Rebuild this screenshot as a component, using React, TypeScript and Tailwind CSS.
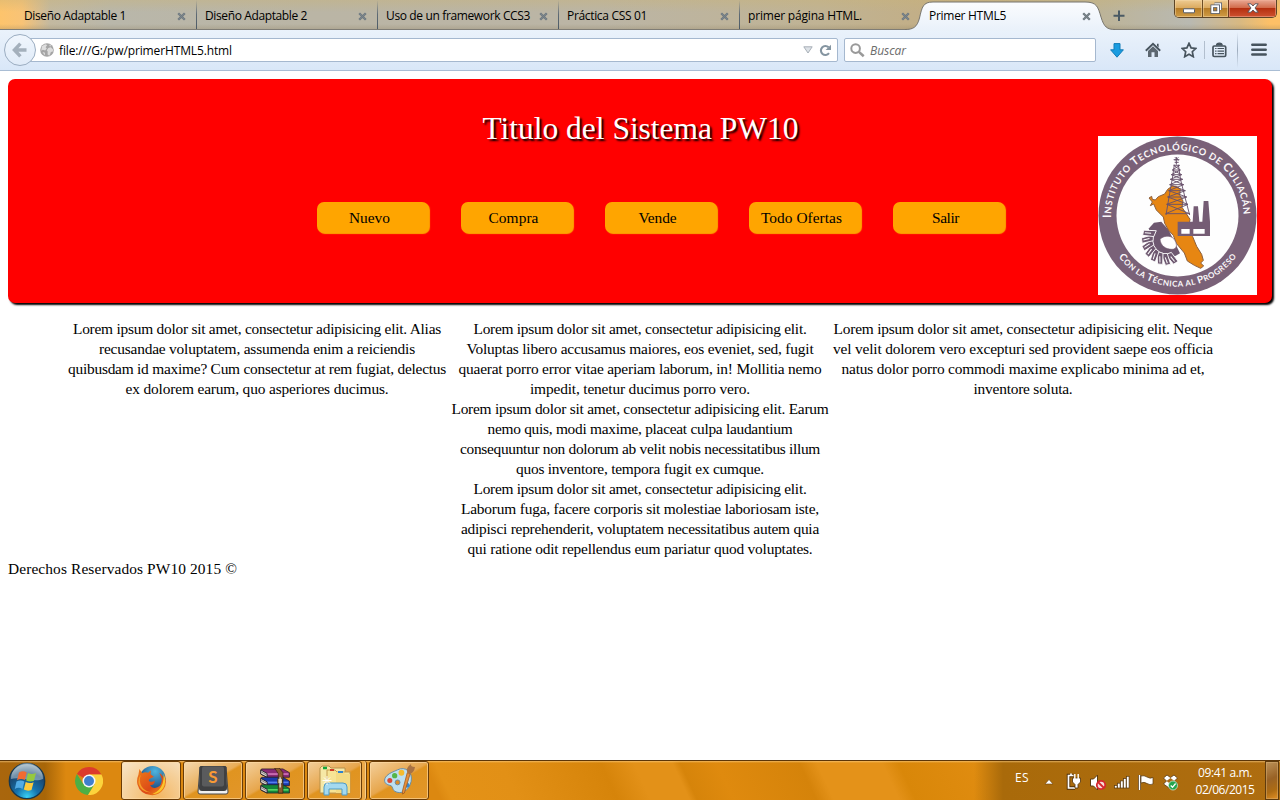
import React, { useLayoutEffect, useRef, useState } from "react";

// Spaces a line of text out evenly so that it takes up the given width.
function Fit({ w, children, className = "" }: { w: number; children: string; className?: string }) {
  const ref = useRef<HTMLSpanElement>(null);
  const [gap, setGap] = useState(0);
  useLayoutEffect(() => {
    if (ref.current) {
      setGap((w - ref.current.getBoundingClientRect().width) / children.length);
    }
  }, []);
  return (
    <span ref={ref} className={"inline-block whitespace-nowrap " + className} style={{ letterSpacing: gap }}>
      {children}
    </span>
  );
}

function CloseX() {
  return (
    <svg viewBox="0 0 9 9" className="h-[9px] w-[9px] shrink-0">
      <path d="M1.2 1.2L7.8 7.8M7.8 1.2L1.2 7.8" stroke="#6d7880" strokeWidth="2.3" />
      <path d="M1.5 1.5L7.5 7.5M7.5 1.5L1.5 7.5" stroke="#7d868b" strokeWidth="1" />
    </svg>
  );
}

const tabs: [string, number][] = [
  ["Diseño Adaptable 1", 102],
  ["Diseño Adaptable 2", 102],
  ["Uso de un framework CCS3", 144],
  ["Práctica CSS 01", 80],
  ["primer página HTML.", 114],
];

function TabBar() {
  return (
    <div className="relative flex h-[30px] border-b border-[#7f7d76] bg-[linear-gradient(90deg,#fdc46c_0px,#f8c376_22px,#c3b9a0_50px,#b9b7aa_110px,#bab5a5_300px,#bbb5a5_600px,#c0b394_820px,#c3ad82_960px,#bdb395_1090px,#b9b9b1_1190px,#d8b982_1240px,#fdc067_1270px)] pl-[15px]">
      <div className="absolute inset-0 bg-[linear-gradient(180deg,#c9b37866_0px,#c9b37800_12px,#8a7b5a00_24px,#8a7b5a40_29px)]" />
      {tabs.map(([t, w], i) => (
        <div
          key={t}
          className={
            "relative flex w-[181px] items-center justify-between pt-[3px] pr-[10.5px] pl-[9px] " +
            (i < 4 ? "after:absolute after:top-0 after:right-[-1px] after:h-[29px] after:w-px after:bg-[linear-gradient(180deg,#8a8d8d00,#5e6a74_50%,#4c5a66)]" : "")
          }
        >
          <Fit w={w} className="text-[12px] leading-[16px] text-black">{t}</Fit>
          <CloseX />
        </div>
      ))}
      <div className="relative flex w-[181px] items-center justify-between pt-[3px] pr-[10.5px] pl-[9px]">
        <svg viewBox="0 0 210 31" className="absolute top-0 left-[-15px] h-[31px] w-[210px]">
          <defs>
            <linearGradient id="tabFill" x1="0" y1="0" x2="0" y2="1">
              <stop offset="0" stopColor="#fbfcfe" />
              <stop offset="1" stopColor="#e9f1fa" />
            </linearGradient>
          </defs>
          <path
            d="M0 31V29.5C8 29.5 12 27.5 14.5 18C17 7 18 2 28 2H180C192 2 193 7 196 17C199 27 202 29.5 210 29.5V31Z"
            fill="url(#tabFill)"
          />
          <path
            d="M0 29.5C8 29.5 12 27.5 14.5 18C17 7 18 2 28 2H180C192 2 193 7 196 17C199 27 202 29.5 210 29.5"
            fill="none"
            stroke="#77756e"
          />
        </svg>
        <Fit w={77} className="relative text-[12px] leading-[16px] text-black">Primer HTML5</Fit>
        <div className="relative flex"><CloseX /></div>
      </div>
      <svg viewBox="0 0 12 12" className="relative mt-[10px] ml-[12px] h-[12px] w-[12px]">
        <path d="M6 .5V11M.5 5.8H11.5" stroke="#4a5a64" strokeWidth="2" />
      </svg>
      <div className="relative mr-[3px] ml-auto flex h-[18px] w-[103px] shrink-0 overflow-hidden rounded-b-[5px] border border-t-0 border-[#5d4527]">
        <div className="flex w-[28px] items-center justify-center border-r border-[#6d4e25] bg-[linear-gradient(180deg,#eecb92,#dcab60_45%,#b77d27_50%,#cf9b45)] shadow-[inset_0_0_0_1px_#f5d9a980]">
          <svg viewBox="0 0 12 6" className="mt-[4px] h-[6px] w-[12px]">
            <rect x=".5" y=".8" width="11" height="4" rx=".5" fill="#fff" stroke="#555d6b" />
          </svg>
        </div>
        <div className="flex w-[26px] items-center justify-center border-r border-[#6d3a20] bg-[linear-gradient(180deg,#eecb92,#dcab60_45%,#b77d27_50%,#cf9b45)] shadow-[inset_0_0_0_1px_#f5d9a980]">
          <svg viewBox="0 0 12 12" className="-mt-[2px] h-[12px] w-[12px]" fill="none">
            <path d="M4.5 2H10.5V8" stroke="#555d6b" strokeWidth="3" />
            <path d="M4.5 2H10.5V8" stroke="#fff" strokeWidth="1.3" />
            <rect x="2.2" y="4.2" width="6" height="6" stroke="#555d6b" strokeWidth="3.4" />
            <rect x="2.2" y="4.2" width="6" height="6" stroke="#fff" strokeWidth="1.8" />
          </svg>
        </div>
        <div className="flex flex-1 items-center justify-center bg-[linear-gradient(180deg,#e9a893,#d26b4c_45%,#b52f10_50%,#ce5230)] shadow-[inset_0_0_0_1px_#f3b29b80]">
          <svg viewBox="0 0 12 10" className="-mt-[2px] h-[10px] w-[12px]">
            <path d="M.8 .8H4L6 3L8 .8H11.2L8 5L11.2 9.2H8L6 7L4 9.2H.8L4 5Z" fill="#fff" stroke="#55525c" strokeWidth=".9" />
          </svg>
        </div>
      </div>
    </div>
  );
}

function Toolbar() {
  return (
    <div className="flex h-[41px] items-start border-b border-[#a9bdd4] bg-[linear-gradient(180deg,#eaf2fb,#d9e7f8)] pl-[4px]">
      <div className="relative z-10 mt-[4px] flex h-[32px] w-[32px] shrink-0 items-center justify-center rounded-full border border-[#9badc1] bg-[linear-gradient(180deg,#f0f6fd,#e0ebf8)]">
        <svg viewBox="0 0 16 16" className="h-[16px] w-[16px]" fill="none">
          <path d="M8.4 1.6L2.4 8L8.4 14.4M2.8 8H14.5" stroke="#a4b0bc" strokeWidth="3.4" />
        </svg>
      </div>
      <div className="mt-[8px] -ml-[7px] flex h-[24px] w-[809px] shrink-0 items-center rounded-[2px] border border-[#a5b8cf] bg-white pl-[10px]">
        <svg viewBox="0 0 14 14" className="h-[14px] w-[14px]">
          <circle cx="7" cy="7" r="6.8" fill="#a5a5a5" />
          <path d="M2 3.2L5.2 1.2L7.2 2.1L5.6 4.3L6.8 5.3L5.2 7.4L2.9 6.8L1.2 7.8Z" fill="#dedede" />
          <path d="M8.3 5L10.8 4.2L13.1 6.4L12.8 8.6L10.9 8.9L9.4 12.8L7.6 11.4L7.7 8.6L6.8 7.2Z" fill="#dcdcdc" />
          <path d="M9 1.5L11.4 2.7L10 3.6ZM2.5 9L5 9.8L4.8 12.6Z" fill="#dedede" />
        </svg>
        <Fit w={173} className="ml-[5px] pt-[2px] text-[12px] leading-[16px] text-black">file:///G:/pw/primerHTML5.html</Fit>
        <svg viewBox="0 0 10 8" className="ml-auto h-[8px] w-[10px]">
          <path d="M.8 .8H9.2L5 7Z" fill="#dde2e7" stroke="#a8b0b8" />
        </svg>
        <svg viewBox="0 0 13 13" className="mr-[5px] ml-[6px] h-[13px] w-[13px]">
          <path d="M10 9.2A4.5 4.5 0 1 1 9.6 3.3" fill="none" stroke="#8595a1" strokeWidth="2.1" />
          <path d="M6.6 6H12V.8Z" fill="#8595a1" />
        </svg>
      </div>
      <div className="mt-[8px] ml-[6px] flex h-[24px] w-[252px] shrink-0 items-center rounded-[2px] border border-[#a5b8cf] bg-white pl-[5px]">
        <svg viewBox="0 0 15 15" className="h-[15px] w-[15px]" fill="none">
          <circle cx="5.6" cy="5.6" r="4.3" stroke="#999" strokeWidth="2" />
          <path d="M8.9 8.9L13.7 13.3" stroke="#999" strokeWidth="2.6" />
        </svg>
        <Fit w={36} className="ml-[5px] pt-[2px] text-[12px] leading-[16px] text-[#6c6c6c] italic">Buscar</Fit>
      </div>
      <svg viewBox="0 0 14 15" className="mt-[13px] ml-[14px] h-[15px] w-[14px] shrink-0">
        <path d="M4 .6H10V6.8H13.4L7 14.2L.6 6.8H4Z" fill="#1a9ce0" stroke="#137cb8" />
      </svg>
      <svg viewBox="0 0 16 16" className="mt-[12px] ml-[21px] h-[16px] w-[16px] shrink-0">
        <path d="M.8 8.7L8 1.8L15.2 8.7" fill="none" stroke="#47545e" strokeWidth="1.9" />
        <path d="M12 1.7H13.6V5.5L12 4Z" fill="#47545e" />
        <path d="M3 9L8 4.3L13 9V15H9.5V10.3H6.5V15H3Z" fill="#5c6770" />
      </svg>
      <svg viewBox="0 0 16 16" className="mt-[12px] ml-[20px] h-[16px] w-[16px] shrink-0">
        <path d="M8 1.3L10.1 5.9L14.8 6.4L11.3 9.7L12.3 14.7L8 12.2L3.7 14.7L4.7 9.7L1.2 6.4L5.9 5.9Z" fill="#e7eff8" stroke="#47545e" strokeWidth="1.7" />
      </svg>
      <div className="mt-[11px] ml-[7px] h-[18px] w-px shrink-0 bg-[#b2bfce]" />
      <svg viewBox="0 0 15 16" className="mt-[12px] ml-[7px] h-[16px] w-[15px] shrink-0" fill="none">
        <rect x="1" y="4" width="12.7" height="10.5" rx="1.2" stroke="#47545e" strokeWidth="1.7" />
        <path d="M4.5 3.6C4.5 .4 10.2 .4 10.2 3.6" fill="#47545e" stroke="#47545e" strokeWidth="1.3" />
        <path d="M3.1 6.5H4.5M5.5 6.5H12M3.1 9.1H4.5M5.5 9.1H12M3.1 11.7H4.5M5.5 11.7H12" stroke="#47545e" strokeWidth="1.2" />
      </svg>
      <div className="mt-[2px] ml-[10px] h-[36px] w-px shrink-0 bg-[linear-gradient(180deg,#a9b7c700,#9dacbd_50%,#a9b7c700)]" />
      <svg viewBox="0 0 16 14" className="mt-[13px] ml-[13px] h-[14px] w-[16px] shrink-0">
        <path d="M1.3 1.8H14.7M1.3 6.7H14.7M1.3 11.6H14.7" stroke="#47545e" strokeWidth="2.5" strokeLinecap="round" />
      </svg>
    </div>
  );
}

function Seal() {
  const teeth = Array.from({ length: 8 }, (_, i) => 76 + i * 19);
  return (
    <svg viewBox="54 48 477 477" className="h-[159px] w-[159px] bg-white">
      <defs>
        <path id="arcTop" d="M93 294A199 199 0 0 1 491 286" />
        <path id="arcBottom" d="M116 410A218 218 0 0 0 469 410" />
      </defs>
      <circle cx="292.5" cy="286.5" r="237" fill="#7a6178" />
      <circle cx="292.5" cy="286.5" r="183" fill="#fefefe" />
      <g fill="#fbf8fa" fontFamily="Lato, sans-serif" fontWeight="700">
        <text fontSize="35" textLength="622" lengthAdjust="spacing">
          <textPath href="#arcTop" textLength="622" lengthAdjust="spacing">
            I<tspan fontSize="28">NSTITUTO </tspan>T<tspan fontSize="28">ECNOLÓGICO DE </tspan>C<tspan fontSize="28">ULIACÁN</tspan>
          </textPath>
        </text>
        <text fontSize="30" textLength="412" lengthAdjust="spacing">
          <textPath href="#arcBottom" textLength="412" lengthAdjust="spacing">
            C<tspan fontSize="24">ON LA </tspan>T<tspan fontSize="24">ÉCNICA AL </tspan>P<tspan fontSize="24">ROGRESO</tspan>
          </textPath>
        </text>
      </g>
      <path d="M207 325L222 308L244 305L266 330L300 400L286 408L250 404L224 387L208 356Z" fill="#6e5870" />
      {teeth.map((a) => (
        <g key={a} transform={`rotate(${a} 258 362)`}>
          <path d="M296 355L327 342L332 357L298 374Z" fill="#6e5870" stroke="#fff" strokeWidth="2.5" />
          <path d="M308 360L325 352" stroke="#fff" strokeWidth="3" />
        </g>
      ))}
      <path
        d="M207 234L215 229L217 238L226 240L235 230L254 222L263 208L277 198L289 199L301 207L299 225L309 243L306 262L318 280L330 298L326 322L338 350L350 379L365 403L370 421L362 429L371 438L362 445L343 436L322 423L313 399L289 370L280 346L266 331L254 310L250 291L229 270L221 252L211 257L217 246Z"
        fill="#e78612"
        stroke="#8c603e"
        strokeWidth="3"
      />
      <path d="M240 358C250 347 270 345 280 355C293 370 293 388 276 388C256 388 242 377 240 358Z" fill="#fff" stroke="#765e72" strokeWidth="2" />
      <g fill="none" stroke="#67516b" strokeWidth="2.8">
        <path d="M283 134L277 176L269 220L258 285M295 134L302 180L314 228L329 285" />
        <path d="M281 136H299M277 150H301M274 164H305M271 178H308M269 194H311M266 212H316M263 231H320M260 253H324M257 281H329" />
        <path d="M281 136L301 150L274 164L308 178L269 194L316 212L263 231L324 253L257 281M299 136L277 150L305 164L271 178L311 194L266 212L320 231L260 253L329 281" />
        <path d="M289 111V134M281 119H298M284 127H296M285 112L295 122M295 112L285 122" strokeWidth="3" />
      </g>
      <path d="M293 305H338L341 259H354L358 305H367L371 243H385L390 305V348H293Z" fill="#755c74" />
      <path d="M304 327H329V341H304ZM340 327H374V341H340Z" fill="#fff" />
    </svg>
  );
}

const menu: [string, number][] = [
  ["Nuevo", 41],
  ["Compra", 50],
  ["Vende", 38],
  ["Todo Ofertas", 81],
  ["Salir", 27],
];

const columns: [string, number][][] = [
  [
    ["Lorem ipsum dolor sit amet, consectetur adipisicing elit. Alias", 368],
    ["recusandae voluptatem, assumenda enim a reiciendis", 316],
    ["quibusdam id maxime? Cum consectetur at rem fugiat, delectus", 378],
    ["ex dolorem earum, quo asperiores ducimus.", 263],
  ],
  [
    ["Lorem ipsum dolor sit amet, consectetur adipisicing elit.", 333],
    ["Voluptas libero accusamus maiores, eos eveniet, sed, fugit", 347],
    ["quaerat porro error vitae aperiam laborum, in! Mollitia nemo", 363],
    ["impedit, tenetur ducimus porro vero.", 220],
    ["Lorem ipsum dolor sit amet, consectetur adipisicing elit. Earum", 377],
    ["nemo quis, modi maxime, placeat culpa laudantium", 305],
    ["consequuntur non dolorum ab velit nobis necessitatibus illum", 360],
    ["quos inventore, tempora fugit ex cumque.", 248],
    ["Lorem ipsum dolor sit amet, consectetur adipisicing elit.", 333],
    ["Laborum fuga, facere corporis sit molestiae laboriosam iste,", 358],
    ["adipisci reprehenderit, voluptatem necessitatibus autem quia", 358],
    ["qui ratione odit repellendus eum pariatur quod voluptates.", 345],
  ],
  [
    ["Lorem ipsum dolor sit amet, consectetur adipisicing elit. Neque", 379],
    ["vel velit dolorem vero excepturi sed provident saepe eos officia", 380],
    ["natus dolor porro commodi maxime explicabo minima ad et,", 363],
    ["inventore soluta.", 99],
  ],
];

function Page() {
  return (
    <main className="h-[689px] bg-white px-[8px] pt-[8px] font-['Liberation_Serif',serif] text-[15.4px] leading-[20px] text-black">
      <header className="relative flex h-[224px] flex-col items-center rounded-[7px] bg-[#ff0000] shadow-[2px_2px_2px_#000]">
        <h1 className="mt-[31px] ml-[1px] text-[31.5px] leading-[38px] text-white [text-shadow:2px_2px_2px_#000]">
          <Fit w={316}>Titulo del Sistema PW10</Fit>
        </h1>
        <nav className="mt-[54px] ml-[41px] flex gap-[32px]">
          {menu.map(([t, w]) => (
            <div key={t} className="flex h-[31px] w-[112px] items-center justify-center rounded-[7px] bg-[#ffa500] pt-[1px] pr-[6px] shadow-[1px_1px_1px_#ffa500]">
              <Fit w={w}>{t}</Fit>
            </div>
          ))}
        </nav>
        <div className="absolute top-[57px] right-[15px]">
          <Seal />
        </div>
      </header>
      <section className="mt-[16px] flex justify-center">
        {columns.map((lines, i) => (
          <div key={i} className="flex w-[383px] flex-col items-center">
            {lines.map(([t, w], j) => (
              <Fit key={j} w={w}>{t}</Fit>
            ))}
          </div>
        ))}
      </section>
      <footer>
        <Fit w={229}>Derechos Reservados PW10 2015 ©</Fit>
      </footer>
    </main>
  );
}

function StartOrb() {
  return (
    <svg viewBox="0 0 38 38" className="h-[38px] w-[38px]">
      <defs>
        <radialGradient id="orb" cx=".5" cy=".95" r=".9">
          <stop offset="0" stopColor="#39d1f5" />
          <stop offset=".35" stopColor="#1673ad" />
          <stop offset=".75" stopColor="#1a466f" />
          <stop offset="1" stopColor="#8ba3b5" />
        </radialGradient>
      </defs>
      <circle cx="19" cy="19" r="17.7" fill="url(#orb)" stroke="#17384f" strokeWidth="1.3" />
      <path d="M3 17A16 16 0 0 1 35 17C27 21 12 14 3 17Z" fill="#dce8ee" opacity=".45" />
      <path d="M11 10.5Q15 8 18.7 10.5L16.8 18Q13 15.8 9 18.2Z" fill="#f06b32" />
      <path d="M20 11Q23.5 13 28 11L26 18.8Q22 20.3 18.2 18.5Z" fill="#95c93e" />
      <path d="M8.5 19.5Q12.5 17.4 16.4 19.5L14.5 27Q10.7 24.7 6.8 27Z" fill="#51abe5" />
      <path d="M17.7 20Q21.5 22 25.6 20.2L23.5 28Q19.5 29.5 15.8 27.5Z" fill="#fdca3b" />
    </svg>
  );
}

function ChromeIcon() {
  return (
    <svg viewBox="0 0 28 28" className="h-[28px] w-[28px]">
      <path d="M14 14L1.9 7A14 14 0 0 1 26.4 7.5L14 7.5Z" fill="#dc3b2c" />
      <path d="M1.9 7A14 14 0 0 0 13 28L19.6 17.2L14 14L8.4 17.2Z" fill="#4daf45" />
      <path d="M13 28A14 14 0 0 0 26.4 7.5H14L19.6 17.2Z" fill="#fcd43c" />
      <circle cx="14" cy="14" r="6.5" fill="#f6f7f8" />
      <circle cx="14" cy="14" r="5" fill="#3f7fce" />
    </svg>
  );
}

function FirefoxIcon() {
  return (
    <svg viewBox="0 0 32 32" className="h-[31px] w-[31px]">
      <defs>
        <radialGradient id="globe" cx=".6" cy=".2" r=".8">
          <stop offset="0" stopColor="#4fb5df" />
          <stop offset="1" stopColor="#173d77" />
        </radialGradient>
        <linearGradient id="fox" x1="0" y1="0" x2="1" y2="1">
          <stop offset="0" stopColor="#ee7d1a" />
          <stop offset=".6" stopColor="#dc4a17" />
          <stop offset="1" stopColor="#f6a21c" />
        </linearGradient>
      </defs>
      <circle cx="17" cy="14.5" r="13.5" fill="url(#globe)" />
      <path d="M3.5 4L6.5 8.5Q9 7 12.5 8L15.5 5.5L15 9.5L18.5 12L13.8 14.5Q12.5 16 14 17Q17 18 19.5 16Q19 21 14.5 21Q17 25 22 23Q27 21 26.5 14L24 8Q28.5 11 29 15Q29.7 13 29 10Q33 18 28.5 25Q23 32 15 31Q4 29.5 1.5 20Q.3 15 2.5 10Z" fill="url(#fox)" />
      <path d="M28.5 9Q32 17 28 24Q24 30 17 30Q25 26.5 27.5 19Q28.8 14 28.5 9Z" fill="#fbc62c" />
      <path d="M5 10Q2.5 17 6 22.5Q9 27 15 28Q6 28.5 2.8 20Q1.7 14 5 10Z" fill="#f59c28" />
    </svg>
  );
}

function SublimeIcon() {
  return (
    <svg viewBox="0 0 32 32" className="-mt-[2px] h-[32px] w-[32px]">
      <path d="M3 3H29L31 28Q31 30 29 30H3Q1 30 1 28Z" fill="#f0f0f0" stroke="#484848" />
      <path d="M4 2H28Q29.5 2 29.5 3.5L30 24Q30 27 27 27H5Q2 27 2 24L2.5 3.5Q2.5 2 4 2Z" fill="#3f4042" />
      <rect x="5" y="2.5" width="22" height="20" rx="2" fill="#5a5b5d" />
      <text x="16" y="18.5" textAnchor="middle" fontSize="17" fontWeight="700" fontFamily="Lato, sans-serif" fill="#f99a35">S</text>
    </svg>
  );
}

function BooksIcon() {
  return (
    <svg viewBox="0 0 34 28" className="h-[26px] w-[33px]">
      {[["#8a2a75", "#cf74b8", 1], ["#173aac", "#567cf0", 10], ["#13853a", "#56d565", 18]].map(([a, b, y]) => (
        <g key={String(a)} transform={`translate(0 ${y})`}>
          <path d="M2 0H25L32 4V9H8L2 6Z" fill={String(a)} stroke="#241b2a" strokeWidth=".8" />
          <path d="M8 5.5H31" stroke={String(b)} strokeWidth="1.8" />
          <path d="M1 1L8 5V9L1 5.5Z" fill="#ddd7cd" stroke="#221d2b" />
          <path d="M1.5 3L8 6.8" stroke="#6d6670" strokeWidth=".8" />
        </g>
      ))}
      <path d="M16 0H21L25 5V27H20V6Z" fill="#8b5b2f" stroke="#38230e" strokeWidth=".8" />
      <rect x="19.5" y="11" width="5" height="6" rx="1" fill="#dcc99b" stroke="#30251a" />
      <path d="M22 10V21" stroke="#ddd" strokeWidth="1.5" />
    </svg>
  );
}

function FolderIcon() {
  return (
    <svg viewBox="0 0 34 32" className="h-[32px] w-[34px]">
      <path d="M2 3L4 1H11L13 3H27L28 28H2Z" fill="#f6e8a6" stroke="#b6904a" />
      <path d="M9 5H17L19 7H32V28H9Z" fill="#f7e495" stroke="#c59b50" />
      <path d="M18 7H25L27 9H32V28H18Z" fill="#f4db83" />
      <path d="M5 3H9" stroke="#16a63a" strokeWidth="2.5" />
      <path d="M12 5H16" stroke="#d13c25" strokeWidth="2" />
      <path d="M20 7H25" stroke="#2e83cf" strokeWidth="2" />
      <path d="M6 30V22Q6 18 10 18H25Q29 18 29 22V30H24V24H11V30Z" fill="#a4d9f0" stroke="#4f9bc4" />
      <path d="M9 11V20M4.5 15.5H13.5M6 12.5L12 18.5M12 12.5L6 18.5" stroke="#fff" strokeWidth=".9" />
    </svg>
  );
}

function PaintIcon() {
  return (
    <svg viewBox="0 0 34 32" className="-mt-[2px] h-[31px] w-[33px]">
      <path d="M15 6C23 2 31 8 29 18C27 28 18 32 12 28C9 26 11 23 7 22C1 21 0 16 4 12C7 9 11 8 15 6Z" fill="#bddff0" stroke="#688ba1" />
      <circle cx="19" cy="9" r="3" fill="#f5bb2e" />
      <circle cx="12" cy="12" r="2.7" fill="#55b648" />
      <circle cx="7" cy="17" r="2.6" fill="#d94936" />
      <circle cx="25" cy="22" r="2.5" fill="#3688cf" />
      <circle cx="15" cy="19" r="2.5" fill="#d88b2a" stroke="#688ba1" />
      <path d="M25 9L28 10L22 30L20 31V28Z" fill="#e88f39" stroke="#9b5a22" strokeWidth=".8" />
      <path d="M25 9Q23 4 29 0Q28 3 33 3Q32 9 28 10Z" fill="#a97243" />
    </svg>
  );
}

const taskButton =
  "flex h-[39px] shrink-0 items-center justify-center rounded-[3px] border border-[#6a3c07] shadow-[inset_0_0_0_1px_#ffdca5a0] ";

function Taskbar() {
  return (
    <div className="flex h-[40px] items-start overflow-hidden border-t border-[#5c3608] bg-[linear-gradient(180deg,#ffd38aa0_0px,#ffd38a00_2px),linear-gradient(90deg,#a9660d_0px,#a86608_45px,#d8860e00_66px,#df8b1000_974px,#a96a0a_1003px,#ae6d10_1280px),linear-gradient(65deg,#dc8810_0px,#dc8810_400px,#e49217_410px,#e29016_470px,#d6840a_560px,#e39118_590px,#e39118_625px,#d6840a_632px,#df8a0e_665px,#d5830a_740px,#e49219_756px,#e49219_815px,#d98709_830px,#e08c10_900px)]">
      <div className="ml-[8px] flex h-[39px] items-center"><StartOrb /></div>
      <div className="ml-[29px] flex h-[39px] items-center"><ChromeIcon /></div>
      <div className={taskButton + "ml-[18px] w-[60px] bg-[radial-gradient(circle_at_60%_100%,#f3b55f,#f5cf98_55%,#f7e6cc)]"}><FirefoxIcon /></div>
      <div className={taskButton + "ml-[2px] w-[60px] bg-[linear-gradient(150deg,#f5d9b0,#e9ad58_48%,#e09420_52%,#e2962a)]"}><SublimeIcon /></div>
      <div className={taskButton + "ml-[2px] w-[60px] bg-[linear-gradient(150deg,#f3cf9b,#e7a64c_48%,#e09420_52%,#e2962a)]"}><BooksIcon /></div>
      <div className={taskButton + "ml-[2px] w-[55px] bg-[linear-gradient(150deg,#f3cf9b,#e7a64c_48%,#e09420_52%,#e2962a)]"}><FolderIcon /></div>
      <div className="h-[39px] w-[5px] rounded-r-[3px] border-r border-[#6a3c07] bg-[#eca949] shadow-[inset_-1px_0_#f8ce8c]" />
      <div className={taskButton + "ml-[2px] w-[60px] bg-[linear-gradient(150deg,#f3cf9b,#e7a64c_48%,#e09420_52%,#e2962a)]"}><PaintIcon /></div>
      <div className="ml-auto flex h-[39px] items-center text-white">
        <Fit w={14} className="-mt-[5px] text-[12px] leading-[16px]">ES</Fit>
        <svg viewBox="1045 770 140 20" className="ml-[16px] h-[20px] w-[140px]">
          <path d="M1045 783L1049 778.5L1053 783Z" fill="#fff" stroke="#6b4310" strokeWidth=".6" />
          <path d="M1073.5 774.5H1068.5V787H1075" fill="none" stroke="#4f310b" strokeWidth="3.5" />
          <path d="M1073.5 774.5H1068.5V787H1075M1071 772.5V775" fill="none" stroke="#fff" strokeWidth="1.7" />
          <path d="M1072.5 777H1080.5V781L1078 783.5V787H1075V783.5L1072.5 781Z" fill="#fff" stroke="#4f310b" strokeWidth=".8" />
          <path d="M1074.8 773V778M1078.2 773V778" stroke="#fff" strokeWidth="1.4" />
          <path d="M1090.5 778H1093.5L1097.5 774V789L1093.5 785H1090.5Z" fill="#fff" stroke="#5c3c12" />
          <circle cx="1101" cy="784" r="4.2" fill="#f8dada" stroke="#d7262d" strokeWidth="1.8" />
          <path d="M1098 781L1104 787" stroke="#d7262d" strokeWidth="1.8" />
          {[0, 1, 2, 3, 4].map((i) => (
            <rect key={i} x={1114.5 + i * 3} y={784.5 - i * 2.3} width="2.6" height={2.5 + i * 2.3} fill="#fff" stroke="#553711" strokeWidth=".7" />
          ))}
          <path d="M1139.5 774V789" stroke="#4f310b" strokeWidth="3" />
          <path d="M1139.5 774V789" stroke="#fff" strokeWidth="1.5" />
          <path d="M1141 775Q1144 774 1147 776Q1150 778 1153 776.5V783Q1150 784.5 1147 782.5Q1144 780.5 1141 782Z" fill="#fff" stroke="#553711" strokeWidth=".7" />
          <path d="M1163.5 777L1167 774L1170.5 776.5L1174 774L1177.5 777L1174.5 780L1177.5 783L1170.5 788L1163.5 783L1166.5 780Z" fill="#fff" stroke="#553711" strokeWidth=".8" />
          <path d="M1166.5 780L1170.5 777L1174.5 780L1170.5 783Z" fill="#a66a17" />
          <circle cx="1173" cy="784.5" r="4.5" fill="#25a54e" stroke="#dcefdc" strokeWidth=".7" />
          <path d="M1170.7 784.5L1172.5 786.3L1175.6 782.5" stroke="#fff" strokeWidth="1.3" fill="none" />
        </svg>
        <div className="ml-[10px] flex w-[60px] flex-col items-center text-[12px] leading-[17px]">
          <Fit w={54}>09:41 a.m.</Fit>
          <Fit w={59}>02/06/2015</Fit>
        </div>
        <div className="mr-[1px] ml-[10px] h-[39px] w-[14px] border border-[#5f3b0c] bg-[linear-gradient(155deg,#bc9258,#996225_45%,#ae6c13_75%,#e49126)] shadow-[inset_0_0_0_1px_#d7ad7180]" />
      </div>
    </div>
  );
}

export default function App() {
  return (
    <div className="h-[800px] w-[1280px] overflow-hidden bg-white font-['Open_Sans','Noto_Sans',sans-serif]">
      <TabBar />
      <Toolbar />
      <Page />
      <Taskbar />
    </div>
  );
}
